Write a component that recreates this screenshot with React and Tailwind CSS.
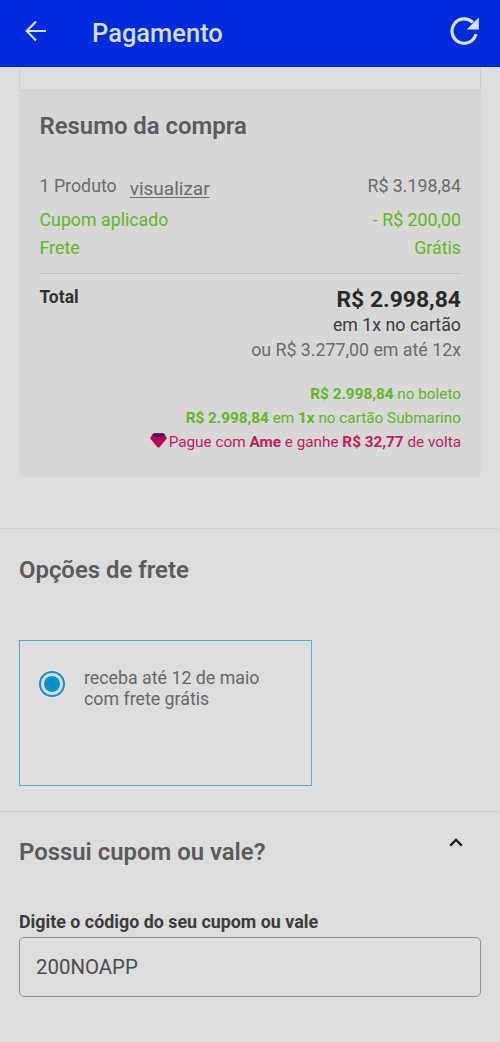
import React, { useState } from 'react';

const priceRows = [
  { label: 'Cupom aplicado', value: '- R$ 200,00' },
  { label: 'Frete', value: 'Grátis' },
];

const BackIcon = () => (
  <svg width="22" height="22" viewBox="0 0 22 22" fill="none" stroke="#d5defa" strokeWidth="2.2">
    <path d="M21 11H2M11 1.5L1.7 11L11 20.5" />
  </svg>
);

const ReloadIcon = () => (
  <svg width="29" height="28" viewBox="0 0 29 28" fill="none">
    <path d="M26 17.2A12.2 12.2 0 1 1 22.8 5.4" stroke="#dbe3fb" strokeWidth="3.2" />
    <path d="M28.8 0.5V12.6H16.6Z" fill="#dbe3fb" />
  </svg>
);

const AmeIcon = () => (
  <svg width="17" height="15" viewBox="0 0 17 15">
    <path d="M4.3 0.3H12.7Q14 0.4 15 2L16.5 4.4Q17 5.4 16.2 6.3L9.6 13.9Q8.5 15 7.4 13.9L0.8 6.3Q0 5.4 0.5 4.4L2 2Q3 0.4 4.3 0.3Z" fill="#bd0354" />
    <path d="M4.3 0.3H12.7Q14 0.4 15 2L8.5 4.4L2 2Q3 0.4 4.3 0.3Z" fill="#42185c" />
    <path d="M5 4.6L8.5 6.5L12.5 4" fill="none" stroke="#75104f" strokeWidth="0.9" />
  </svg>
);

const ChevronUp = () => (
  <svg width="14" height="9" viewBox="0 0 14 9" fill="none" stroke="#222" strokeWidth="2.4">
    <path d="M1.2 7.7L7 1.9L12.8 7.7" />
  </svg>
);

const Header = () => (
  <header className="flex h-[67px] items-center border-b border-[#0b24b8] bg-[#002bdc] pl-[25px] pr-[21px]">
    <button type="button" aria-label="Voltar" className="-mt-1">
      <BackIcon />
    </button>
    <h1 className="ml-[45px] text-[25.5px] leading-7 font-medium text-[#d5defa]">Pagamento</h1>
    <button type="button" aria-label="Atualizar" className="-mt-1 ml-auto">
      <ReloadIcon />
    </button>
  </header>
);

const Summary = () => (
  <section className="mx-[19px] h-[386px] bg-[#d7d7d7] pt-[21px] pr-5 pl-[20.5px]">
    <h2 className="text-[23.9px] leading-7 font-semibold text-[#5b5b5b]">Resumo da compra</h2>

    <div className="mt-[34px] text-[17.8px] text-[#6b6b6b]">
      <div className="flex h-8 leading-6">
        <span>1 Produto</span>
        <a href="#produtos" className="ml-[13px] pt-[3px] text-[19px] underline underline-offset-2">visualizar</a>
        <span className="ml-auto">R$ 3.198,84</span>
      </div>
      {priceRows.map((row) => (
        <div key={row.label} className="flex justify-between leading-7 text-[#62b722]">
          <span>{row.label}</span>
          <span>{row.value}</span>
        </div>
      ))}
    </div>

    <div className="mt-[11px] flex justify-between border-t border-[#bfbfbf] pt-[11px]">
      <span className="text-[17.5px] leading-6 font-bold text-[#333]">Total</span>
      <div className="pt-[2px] text-right text-[17.8px]">
        <p className="text-[22.9px] leading-[26px] font-bold text-[#292929]">R$ 2.998,84</p>
        <p className="leading-[23px] text-[#3c3c3c]">em 1x no cartão</p>
        <p className="leading-[27px] text-[#6b6b6b]">ou R$ 3.277,00 em até 12x</p>
      </div>
    </div>

    <div className="mt-[19px] text-right text-[15.3px] leading-6 text-[#62b722]">
      <p><b>R$ 2.998,84</b> no boleto</p>
      <p><b>R$ 2.998,84</b> em <b>1x</b> no cartão Submarino</p>
      <p className="flex justify-end text-[#bd1c5f]">
        <span className="mt-[3px] mr-[2px]"><AmeIcon /></span>
        <span>Pague com <b>Ame</b> e ganhe <b>R$ 32,77</b> de volta</span>
      </p>
    </div>
  </section>
);

const Shipping = () => (
  <section className="mt-[51px] h-[283px] border-t border-[#cecece] px-[19px] pt-[27px]">
    <h2 className="text-[23.9px] leading-7 font-semibold text-[#5b5b5b]">Opções de frete</h2>
    <label className="mt-[55.5px] flex h-[146px] w-[293px] border border-[#4faec9] pt-[26px] pl-[19px]">
      <input type="radio" name="frete" defaultChecked className="peer sr-only" />
      <span className="mt-[4.5px] flex size-[26px] items-center justify-center rounded-full border-2 border-[#148fc0]">
        <span className="size-4 rounded-full bg-[#078fc9]" />
      </span>
      <span className="ml-[19px] text-[17.8px] leading-[21px] text-[#686868]">
        receba até 12 de maio<br />com frete grátis
      </span>
    </label>
  </section>
);

const Coupon = () => {
  const [code, setCode] = useState('200NOAPP');

  return (
    <section className="border-t border-[#cbcbcb] px-[19px] pt-[26px]">
      <div className="flex justify-between">
        <h2 className="text-[23.9px] leading-7 font-semibold text-[#5b5b5b]">Possui cupom ou vale?</h2>
        <span className="mr-[18px]"><ChevronUp /></span>
      </div>
      <label htmlFor="coupon" className="mt-[44px] block text-[17.85px] leading-6 font-bold text-[#3c3c3c]">
        Digite o código do seu cupom ou vale
      </label>
      <input
        id="coupon"
        value={code}
        onChange={(e) => setCode(e.target.value)}
        className="mt-[3px] block h-[60px] w-full rounded-[5px] border border-[#929292] px-[16px] text-[20.4px] text-[#4c4c4c]"
      />
    </section>
  );
};

const App = () => (
  <div className="h-[1042px] overflow-hidden bg-[#dddddd] font-['Roboto',sans-serif]">
    <Header />
    <div className="mx-[19px] h-6 border-x border-b border-[#cdcdcd]" />
    <Summary />
    <Shipping />
    <Coupon />
  </div>
);

export default App;
